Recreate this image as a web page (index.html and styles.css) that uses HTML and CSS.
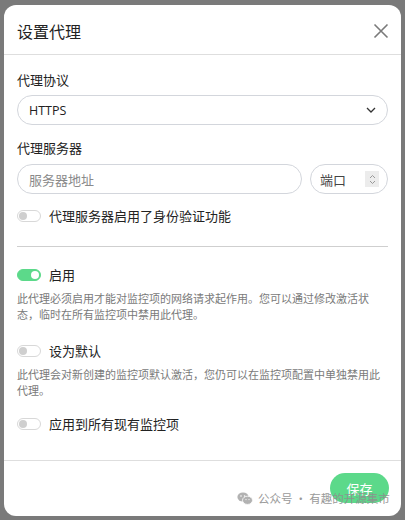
FILE: index.html
```html
<!DOCTYPE html>
<html lang="zh">
<head>
<meta charset="utf-8">
<link rel="stylesheet" href="styles.css">
</head>
<body>
<div class="modal">
  <div class="header">
    <div class="title">设置代理</div>
    <svg class="close" width="16" height="16" viewBox="0 0 16 16"><path d="M1.5 1.5L14.5 14.5M14.5 1.5L1.5 14.5" stroke="#7a7a7a" stroke-width="1.6" fill="none"/></svg>
  </div>
  <div class="body">
    <div class="label">代理协议</div>
    <div class="select">
      <span class="sel-text">HTTPS</span>
      <svg class="chev" width="10" height="6" viewBox="0 0 10 6"><path d="M1 1L5 5L9 1" stroke="#333" stroke-width="1.3" fill="none"/></svg>
    </div>
    <div class="label label2">代理服务器</div>
    <div class="inputs">
      <div class="input addr">服务器地址</div>
      <div class="input port"><span>端口</span>
        <span class="spin"><svg width="7" height="11" viewBox="0 0 7 11"><path d="M1 4L3.5 1.5L6 4M1 7L3.5 9.5L6 7" stroke="#999" stroke-width="1" fill="none"/></svg></span>
      </div>
    </div>
    <div class="toggle-row first">
      <span class="toggle"></span><span>代理服务器启用了身份验证功能</span>
    </div>
    <div class="divider"></div>
    <div class="toggle-row">
      <span class="toggle on"></span><span>启用</span>
    </div>
    <div class="desc">此代理必须启用才能对监控项的网络请求起作用。您可以通过修改激活状态，临时在所有监控项中禁用此代理。</div>
    <div class="toggle-row sp">
      <span class="toggle"></span><span>设为默认</span>
    </div>
    <div class="desc">此代理会对新创建的监控项默认激活，您仍可以在监控项配置中单独禁用此代理。</div>
    <div class="toggle-row sp last">
      <span class="toggle"></span><span>应用到所有现有监控项</span>
    </div>
  </div>
  <div class="footer">
    <div class="save">保存</div>
    <div class="wm">
      <svg width="16" height="13" viewBox="0 0 16 13"><ellipse cx="6" cy="5" rx="5.6" ry="4.6" fill="#aaa"/><ellipse cx="10.5" cy="8.3" rx="5" ry="4.1" fill="#aaa" stroke="#fff" stroke-width="0.8"/><circle cx="4" cy="4" r="0.8" fill="#fff"/><circle cx="7.6" cy="4" r="0.8" fill="#fff"/><circle cx="9" cy="7.6" r="0.6" fill="#fff"/><circle cx="12" cy="7.6" r="0.6" fill="#fff"/></svg>
      <span>公众号 · 有趣的开源集市</span>
    </div>
  </div>
</div>
</body>
</html>
```
FILE: styles.css
```css
* { box-sizing: border-box; }
html, body { margin: 0; padding: 0; }
body {
  background: #7a7a7a;
  width: 405px;
  height: 520px;
  overflow: hidden;
  font-family: "Noto Sans CJK SC", "Noto Sans", sans-serif;
  color: #222;
}
.modal {
  margin: 5px 4px 0 4px;
  width: 397px;
  height: 511px;
  background: #fff;
  border-radius: 12px;
  display: flex;
  flex-direction: column;
}
.header {
  display: flex;
  align-items: center;
  justify-content: space-between;
  padding: 15px 12px 12px 13px;
  border-bottom: 1px solid #dedede;
}
.title { font-size: 16px; line-height: 22px; }
.close { display: block; margin-top: -1px; }
.body {
  padding: 15px 13px 26px 13px;
  border-bottom: 1px solid #dedede;
  flex: none;
}
.label { font-size: 13px; line-height: 20px; }
.label2 { margin-top: 13px; }
.select {
  margin-top: 5px;
  height: 30px;
  border: 1px solid #d3d6dc;
  border-radius: 15px;
  display: flex;
  align-items: center;
  justify-content: space-between;
  padding: 0 11px 0 11px;
}
.sel-text { font-family: "Open Sans", "Noto Sans", sans-serif; font-size: 12.5px; color: #222; }
.chev { display: block; }
.inputs { display: flex; gap: 8px; margin-top: 6px; }
.input {
  height: 30px;
  border: 1px solid #d3d6dc;
  border-radius: 15px;
  display: flex;
  align-items: center;
  padding: 0 11px;
  font-size: 13px;
}
.addr { flex: 1; color: #8a8a8a; }
.port { width: 78px; justify-content: space-between; color: #444; padding: 0 8px 0 9px; }
.spin {
  width: 14px; height: 16px;
  background: #ececec;
  display: flex; align-items: center; justify-content: center;
}
.spin svg { display: block; }
.toggle-row {
  display: flex;
  align-items: center;
  gap: 8px;
  font-size: 13px;
  line-height: 20px;
}
.toggle-row.first { margin-top: 12px; }
.toggle-row.sp { margin-top: 19px; }
.toggle-row.last { margin-top: 16px; }
.toggle {
  position: relative;
  width: 24px;
  height: 12px;
  border: 1px solid #d8d8d8;
  border-radius: 6px;
  background: #fff;
  flex: none;
}
.toggle::after {
  content: "";
  position: absolute;
  left: 1px; top: 1px;
  width: 8px; height: 8px;
  border-radius: 50%;
  background: #cfcfcf;
}
.toggle.on { background: #5cd98a; border-color: #5cd98a; }
.toggle.on::after { left: auto; right: 1px; background: #fff; }
.divider { height: 1px; background: #cfcfcf; margin: 20px 0 18px; }
.desc {
  margin-top: 5px;
  font-size: 11px;
  line-height: 16px;
  color: #7a7a7a;
}
.footer {
  position: relative;
  flex: 1;
  display: flex;
  justify-content: flex-end;
  padding: 12px 12px 0 0;
}
.save {
  width: 59px;
  height: 30px;
  border-radius: 15px;
  background: #5cd98a;
  color: #fff;
  font-size: 13px;
  display: flex; align-items: center; justify-content: center;
}
.wm {
  position: absolute;
  left: 233px;
  top: 29px;
  display: flex;
  align-items: center;
  gap: 5px;
  font-size: 11.5px;
  color: #8f8f8f;
  opacity: 0.9;
}
.wm svg { display: block; }
```
